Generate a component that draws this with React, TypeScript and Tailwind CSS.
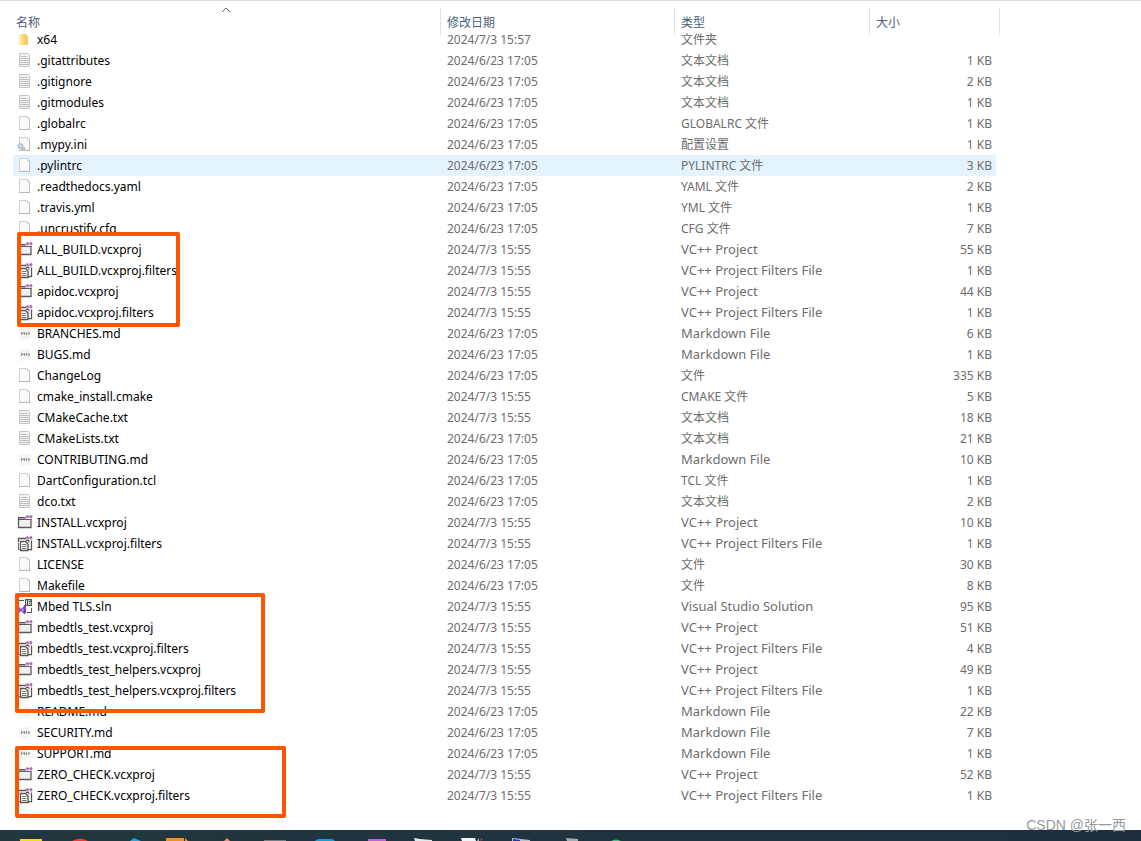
type Kind = 'folder' | 'text' | 'blank' | 'config' | 'project' | 'filters' | 'markdown' | 'solution';

interface Entry {
  name: string;
  kind: Kind;
  date: string;
  type: string;
  size: string;
}

const JUNE = '2024/6/23 17:05';
const JULY = '2024/7/3 15:55';
const PROJECT = 'VC++ Project';
const FILTERS = 'VC++ Project Filters File';
const MARKDOWN = 'Markdown File';

const e = (name: string, kind: Kind, date: string, type: string, size: string): Entry => ({ name, kind, date, type, size });

const entries: Entry[] = [
  e('x64', 'folder', '2024/7/3 15:57', '文件夹', ''),
  e('.gitattributes', 'text', JUNE, '文本文档', '1 KB'),
  e('.gitignore', 'text', JUNE, '文本文档', '2 KB'),
  e('.gitmodules', 'text', JUNE, '文本文档', '1 KB'),
  e('.globalrc', 'blank', JUNE, 'GLOBALRC 文件', '1 KB'),
  e('.mypy.ini', 'config', JUNE, '配置设置', '1 KB'),
  e('.pylintrc', 'blank', JUNE, 'PYLINTRC 文件', '3 KB'),
  e('.readthedocs.yaml', 'blank', JUNE, 'YAML 文件', '2 KB'),
  e('.travis.yml', 'blank', JUNE, 'YML 文件', '1 KB'),
  e('.uncrustify.cfg', 'blank', JUNE, 'CFG 文件', '7 KB'),
  e('ALL_BUILD.vcxproj', 'project', JULY, PROJECT, '55 KB'),
  e('ALL_BUILD.vcxproj.filters', 'filters', JULY, FILTERS, '1 KB'),
  e('apidoc.vcxproj', 'project', JULY, PROJECT, '44 KB'),
  e('apidoc.vcxproj.filters', 'filters', JULY, FILTERS, '1 KB'),
  e('BRANCHES.md', 'markdown', JUNE, MARKDOWN, '6 KB'),
  e('BUGS.md', 'markdown', JUNE, MARKDOWN, '1 KB'),
  e('ChangeLog', 'blank', JUNE, '文件', '335 KB'),
  e('cmake_install.cmake', 'blank', JULY, 'CMAKE 文件', '5 KB'),
  e('CMakeCache.txt', 'text', JULY, '文本文档', '18 KB'),
  e('CMakeLists.txt', 'text', JUNE, '文本文档', '21 KB'),
  e('CONTRIBUTING.md', 'markdown', JUNE, MARKDOWN, '10 KB'),
  e('DartConfiguration.tcl', 'blank', JUNE, 'TCL 文件', '1 KB'),
  e('dco.txt', 'text', JUNE, '文本文档', '2 KB'),
  e('INSTALL.vcxproj', 'project', JULY, PROJECT, '10 KB'),
  e('INSTALL.vcxproj.filters', 'filters', JULY, FILTERS, '1 KB'),
  e('LICENSE', 'blank', JUNE, '文件', '30 KB'),
  e('Makefile', 'blank', JUNE, '文件', '8 KB'),
  e('Mbed TLS.sln', 'solution', JULY, 'Visual Studio Solution', '95 KB'),
  e('mbedtls_test.vcxproj', 'project', JULY, PROJECT, '51 KB'),
  e('mbedtls_test.vcxproj.filters', 'filters', JULY, FILTERS, '4 KB'),
  e('mbedtls_test_helpers.vcxproj', 'project', JULY, PROJECT, '49 KB'),
  e('mbedtls_test_helpers.vcxproj.filters', 'filters', JULY, FILTERS, '1 KB'),
  e('README.md', 'markdown', JUNE, MARKDOWN, '22 KB'),
  e('SECURITY.md', 'markdown', JUNE, MARKDOWN, '7 KB'),
  e('SUPPORT.md', 'markdown', JUNE, MARKDOWN, '1 KB'),
  e('ZERO_CHECK.vcxproj', 'project', JULY, PROJECT, '52 KB'),
  e('ZERO_CHECK.vcxproj.filters', 'filters', JULY, FILTERS, '1 KB'),
];

function Sheet() {
  return (
    <>
      <path d="M2.500 .5h8l2 2v11h-10z" fill="#fafafa" stroke="#d0d0d0" />
      <path d="M2 13.500h11" stroke="#b8b8b8" />
      <path d="M12.500 3v10" stroke="#bcbcbc" />
      <path d="M10.500 .5v2h2" fill="#fff" stroke="#cfcfcf" />
    </>
  );
}

function PurplePlus() {
  return (
    <g fill="#a45bab">
      <path d="M9.500 0h2v3.500h-2zM13 0h2v3.500h-2z" opacity=".7" />
      <path d="M8.500 1h7v1.500h-7z" opacity=".75" />
    </g>
  );
}

function FileIcon({ kind }: { kind: Kind }) {
  return (
    <svg viewBox="0 0 16 16" className="size-4 shrink-0" fill="none" aria-hidden="true">
      {kind === 'folder' && (
        <>
          <path d="M2 2h6v11H2z" fill="#ffe9a6" />
          <path d="M5 2h5v10H6z" fill="#f5cf68" />
          <path d="M4 3l3 1v9l-3-1z" fill="#fbdc84" />
          <path d="M9 4h2v9H6v-1h3z" fill="#f3cb63" />
        </>
      )}
      {kind === 'text' && (
        <>
          <path d="M2.500 .5h9l1 1v12h-10z" fill="#f3f3f3" stroke="#c6c6c6" />
          <path d="M4 3.500h6M3 5.500h9M3 7.500h9M3 9.500h9M3 11.500h9" stroke="#bdbdbd" />
        </>
      )}
      {kind === 'blank' && <Sheet />}
      {kind === 'config' && (
        <>
          <Sheet />
          <circle cx="3.500" cy="9" r="2.500" fill="#b9c9d6" stroke="#94a7b6" strokeDasharray="1.500 1" />
          <circle cx="3.500" cy="9" r="1" fill="#eef3f7" />
          <circle cx="6.500" cy="12" r="2" fill="#b3c0ca" />
        </>
      )}
      {kind === 'project' && (
        <>
          <path d="M1.500 3.500h12.500v9H1.500z" fill="#f0eff1" stroke="#5c5c5c" strokeWidth="1.300" />
          <path d="M1 2h8v3H1z" fill="#555" />
          <path d="M2 3h6v1H2z" fill="#aaa" />
          <path d="M8.500 0h7.500v4H8.500z" fill="#fff" />
          <path d="M8.500 4.500H14.500" stroke="#666" />
          <PurplePlus />
        </>
      )}
      {kind === 'filters' && (
        <>
          <path d="M1 2.500h8M1.500 2v4M9 4.500h3M14.500 4.500v9H11" stroke="#555" strokeWidth="1.300" />
          <path d="M9 5h5v8H9z" fill="#f0eff1" />
          <path d="M3.500 5.500h5l2.500 2.500v6.500H3.500z" fill="#fff" stroke="#555" strokeWidth="1.300" />
          <path d="M5 8.500h4.500M5 10.500h4.500M5 12.500h4.500" stroke="#777" />
          <path d="M1.500 7v6.500H3M12 4.500v2" stroke="#666" />
          <PurplePlus />
        </>
      )}
      {kind === 'markdown' && (
        <>
          <path d="M2 3l11-1 1 11-11 1z" fill="#f4f4f4" />
          <path d="M4.500 9V6l1.500 2 1.500-2v3M9.500 6v3M8.500 7.500h2M12 6v3M11 7.500h2" stroke="#999" />
        </>
      )}
      {kind === 'solution' && (
        <>
          <path d="M1 1.500h6M1.500 1v3M14.500 9v4.500H10" stroke="#555" />
          <path d="M8 0h7v7H8z" fill="#555" />
          <path d="M9.500 1v5M13.500 1.500h-2v4h2v-2h-2" stroke="#eee" strokeWidth=".8" />
          <path d="M2 8v5l5-5v6L2 9" stroke="#8a4fd0" strokeWidth="1.500" />
          <path d="M7 6l2 1v7l-2 1z" fill="#7b3fc4" />
        </>
      )}
    </svg>
  );
}

const columns = [
  { label: '名称', pad: 'pl-[3px]' },
  { label: '修改日期', pad: 'pl-[7px]' },
  { label: '类型', pad: 'pl-[7px]' },
  { label: '大小', pad: 'pl-[7px]' },
];

const hasHan = (s: string) => /[\u4e00-\u9fff]/.test(s);

function FileTable() {
  return (
    <table className="w-[983px] table-fixed border-collapse text-xs">
      <colgroup>
        <col className="w-[427px]" />
        <col className="w-[234px]" />
        <col className="w-[195px]" />
        <col className="w-[127px]" />
      </colgroup>
      <thead>
        <tr>
          {columns.map((c, i) => (
            <th key={c.label} scope="col" className="relative h-7 p-0 text-left font-normal">
              <button type="button" className={`flex h-7 w-full items-end leading-3 text-[#4c607a] ${c.pad}`}>
                {c.label}
              </button>
              {i === 0 && (
                <svg viewBox="0 0 10 6" className="absolute top-1.5 left-52 h-1.5 w-2.5" fill="none" aria-hidden="true">
                  <path d="M1 5l4-4 4 4" stroke="#666" />
                </svg>
              )}
              {i > 0 && <span className="absolute top-[7px] left-0 h-[27px] w-px bg-[#e2e2e2]" />}
              {i === 3 && <span className="absolute top-[7px] -right-1 h-[27px] w-px bg-[#e2e2e2]" />}
            </th>
          ))}
        </tr>
      </thead>
      <tbody>
        {entries.map((f) => (
          <tr key={f.name} className={`h-[21px] text-[#6d6d6d] ${f.name === '.pylintrc' ? 'bg-[#e5f3ff]' : ''}`}>
            <td className="p-0 pl-1">
              <div className="flex h-[21px] items-center gap-1 leading-5 text-black">
                <FileIcon kind={f.kind} />
                <span className="whitespace-nowrap">{f.name}</span>
              </div>
            </td>
            <td className="p-0 pl-[7px] leading-5">{f.date}</td>
            <td className={hasHan(f.type) ? 'p-0 pl-[7px] leading-5' : 'p-0 pb-0.5 pl-[7px] text-[13px] leading-[18px]'}>{f.type}</td>
            <td className="p-0 pr-1 text-right leading-5">{f.size}</td>
          </tr>
        ))}
      </tbody>
    </table>
  );
}

function Taskbar() {
  return (
    <footer className="h-[11px] overflow-hidden bg-linear-to-r from-[#21383d] to-[#1d2f40]">
      <svg viewBox="0 0 640 11" className="h-[11px] w-[640px]" aria-hidden="true">
        <path d="M20 9h22v2H20z" fill="#ffdc00" />
        <path d="M72 11q8-5 16 0z" fill="#e8402f" />
        <path d="M130 11l4-3 7 3z" fill="#2aa5e8" />
        <path d="M166 8h18v3h-18zM185 8l3 3h-3z" fill="#f68b1f" />
        <path d="M224 11l3-3 3 3z" fill="#ff8078" />
        <path d="M264 10h22v1h-22z" fill="#777d80" />
        <path d="M315 11q1-2 4-2h12q3 0 4 2z" fill="#0f9fe0" />
        <path d="M368 9h18v2h-18z" fill="#c65be8" />
        <path d="M414 8l6 1 12 1v1h-17z" fill="#e4e8e8" />
        <path d="M461 8h14l1 3h-14z" fill="#f2f2f2" />
        <path d="M477 11l2-3v3z" fill="#b8b8b8" />
        <path d="M480 10l2-2 1 1-2 2z" fill="#b83a3a" />
        <path d="M512 8l18 2v1h-18z" fill="#b9c2cb" />
        <path d="M513 9l7 1v1h-7z" fill="#2534b0" />
        <path d="M566 8l12 1v2h-11z" fill="#a5adaf" />
        <path d="M611 11q5-3 10 0z" fill="#38c878" />
      </svg>
    </footer>
  );
}

export default function App() {
  return (
    <div className="relative flex min-h-screen flex-col bg-white font-['Noto_Sans','Noto_Sans_CJK_SC',sans-serif]">
      <main className="flex-1 overflow-x-auto border-t border-[#d9d9d9] pl-[13px]">
        <FileTable />
      </main>
      <Taskbar />

      <div className="pointer-events-none absolute top-[232px] left-[17px] h-[95px] w-[163px] rounded-xs border-4 border-[#ff5500]" />
      <div className="pointer-events-none absolute top-[593px] left-[15px] h-[120px] w-[250px] rounded-xs border-4 border-[#ff5500]" />
      <div className="pointer-events-none absolute top-[746px] left-[15px] h-[72px] w-[271px] rounded-xs border-4 border-[#ff5500]" />
      <p className="absolute right-[15px] bottom-1.5 font-['Liberation_Sans','Noto_Sans_CJK_SC',sans-serif] text-sm leading-5 text-[#9a9a9a]">
        CSDN @张一西
      </p>
    </div>
  );
}
